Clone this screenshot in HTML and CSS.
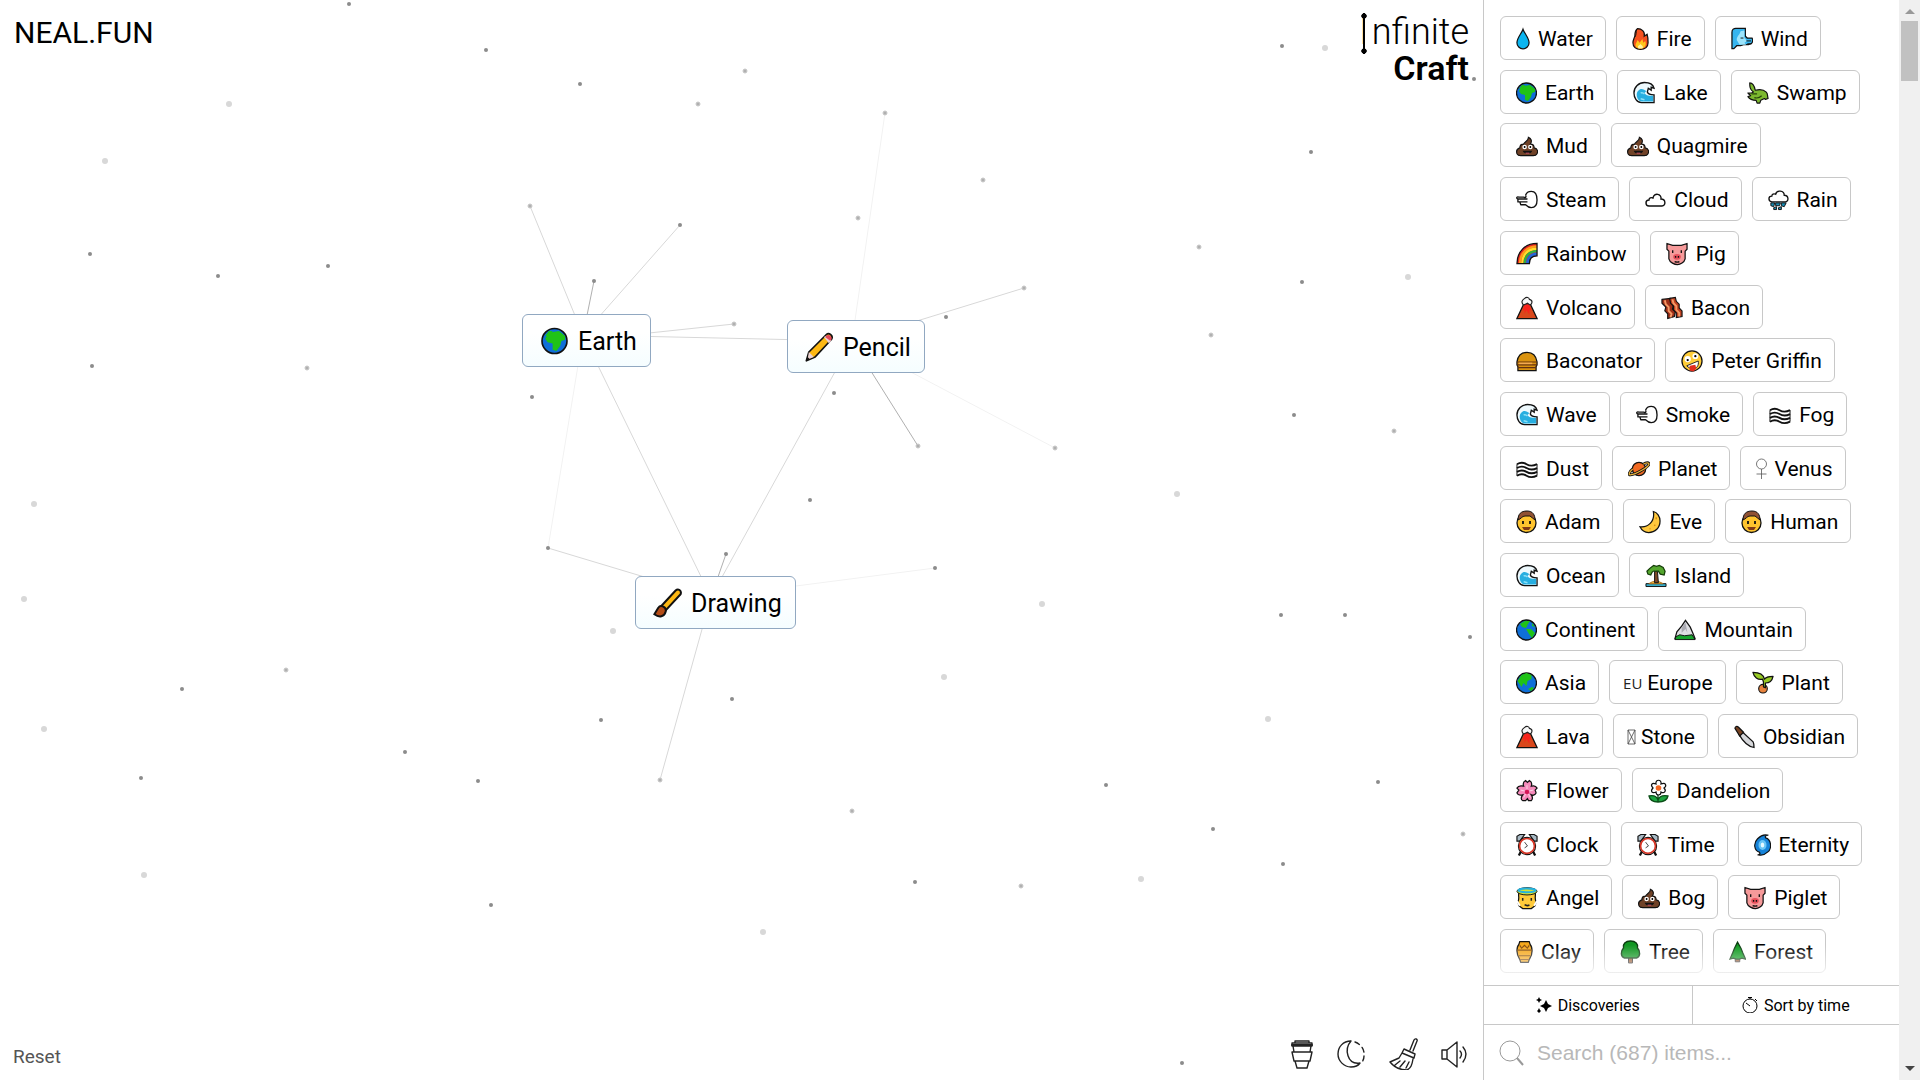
FILE: index.html
```html
<!DOCTYPE html>
<html lang="en">
<head>
<meta charset="utf-8">
<title>Infinite Craft</title>
<link rel="stylesheet" href="styles.css">
</head>
<body>
<svg class="sprite" aria-hidden="true">
  <defs>
    <g id="globe"><circle cx="10.500" cy="12" r="10" fill="#0f6fd8" stroke="#111" stroke-width="1.300"/></g>
    <symbol id="water" viewBox="0 0 15 24"><path d="M7.500 1.500C6 6 1 11 1 16a6.500 6.500 0 0 0 13 0C14 11 9 6 7.500 1.500z" fill="#0bb5f0" stroke="#111" stroke-width="1.300"/></symbol>
    <symbol id="fire" viewBox="0 0 18 24"><path d="M6 1c4 0 8 3 7 8l3-2c1 3 1 5 1 9 0 4-3 7-8 7s-8-3-8-7c0-3 1-4 2-7 0-3 0-6 3-8z" fill="#f4511e" stroke="#111" stroke-width="1.300"/><path d="M5 2c-1 3 0 5-2 8" fill="none" stroke="#111"/><path d="M4 17l2-4 2 3 3-4 1 4 2-2c2 5-1 8-5 8s-6-2-5-5z" fill="#ffc61a"/><path d="M7 22c-2-3 1-3 2-5 1 2 4 3 2 5z" fill="#fff5a0"/></symbol>
    <symbol id="wind" viewBox="0 0 23 24"><path d="M1 22V5c0-3 2-4 4-4h10v8l2 2h5c1 2 1 3 0 5-1 2-3 1-4 2h-5l-3 1H6l-3 3z" fill="#36b5ef" stroke="#111" stroke-width="1.300"/><path d="M14 3v8l3 3-3 2 2 2H9l-3-5c0-4 3-5 4-9z" fill="#9de4fb"/><path d="M10 11h3M16 14h5M17 17h4" stroke="#111" fill="none"/></symbol>
    <symbol id="earth" viewBox="0 0 21 24"><use href="#globe"/><path d="M5 7l3-2 6-1 5 4 0 3-3 1-1 4-3 4-3-1 0-5-4-1-2-3z" fill="#20c316"/><path d="M3 8l3-4 3 0-3 4z" fill="#20c316"/></symbol>
    <symbol id="americas" viewBox="0 0 21 24"><use href="#globe"/><path d="M4 6l5-3 5 0-2 3-2 4-4-1zM10 11l5 0 4 4-3 5-3-4z" fill="#20c316"/><path d="M16 5l3 4-3-1z" fill="#20c316"/></symbol>
    <symbol id="asia" viewBox="0 0 21 24"><use href="#globe"/><path d="M1.500 10l4-6 5-2 5 2 0 4-4 2-1 5-3-3-2 4zM12 18l4-2 2 1-3 3z" fill="#20c316"/></symbol>
    <symbol id="wave" viewBox="0 0 23 24"><path d="M22 22H9C4 22 1 17 1 12 1 6 6 1 12 1c5 0 9 2 10 6l-3-1 0 3-3-2-1 4c1 3 4 3 7 3z" fill="#eef9fd" stroke="#111" stroke-width="1.400"/><path d="M21 21H9c-5-1-7-9-3-12 3-3 6 0 8 1l-2 2c2 3 5 3 9 3z" fill="#27aee0"/><path d="M8 12c2-1 3 0 4 1M8 18l4 1" stroke="#8ce0f7" stroke-width="1.500" fill="none"/></symbol>
    <symbol id="croc" viewBox="0 0 24 24"><path d="M3 1c3 0 5 3 6 8 4-1 9-1 12 2 2 2 1 4 2 7l-3 1-1-1-4 2-1 3h-3l-1-3c-4 0-7-1-9-4l3-1-3-3 4 0 2-1C3 8 3 5 3 1z" fill="#7cb82f" stroke="#111" stroke-width="1.300" stroke-linejoin="round"/><path d="M5 13h6M8 17c3 1 6 0 8-2" stroke="#26450b" fill="none" stroke-width="1.300"/></symbol>
    <symbol id="poop" viewBox="0 0 23 24"><path d="M13 3c3 1 4 4 2 7 3 0 4 2 4 4 4 1 4 4 3 6-1 2-2 2-4 2H5c-2 0-3 0-4-2-1-3 0-5 3-6 0-3 1-4 4-4 0-2 5-3 5-7z" fill="#704227" stroke="#111" stroke-width="1.200"/><circle cx="9" cy="13" r="2.400" fill="#fff"/><circle cx="15" cy="13" r="2.400" fill="#fff"/><path d="M9 12v2M15 12v2" stroke="#111" stroke-width="1.600"/><path d="M7 17h10c-1 4-9 4-10 0z" fill="#111"/><path d="M10 19h4v1h-4z" fill="#e25b70"/></symbol>
    <symbol id="steam" viewBox="0 0 23 24"><path d="M10 7c1-3 3-4 6-4 4 0 6 4 6 9 0 5-2 8-6 8-3 0-4-1-6-3H5l-1-3H2v-3M10 7c1 2 0 3-2 2H3C0 8 0 11 3 11h9M3 14h9" fill="none" stroke="#111" stroke-width="1.400" stroke-linejoin="round"/></symbol>
    <symbol id="cloud" viewBox="0 0 21 24"><path d="M4 18c-4 0-4-6 0-6 0-2 2-3 4-2 1-6 9-4 8 1 5 0 5 7 1 7z" fill="#fff" stroke="#111" stroke-width="1.400"/></symbol>
    <symbol id="rain" viewBox="0 0 22 24"><path d="M4 14C0 13 0 8 4 8c0-2 2-3 4-2 1-5 9-4 9 1 5 0 5 7 1 7z" fill="#fff" stroke="#111" stroke-width="1.400"/><path d="M3 15h4l-1 4-3-1zM8 15h5l-1 3H8zM14 15h5l-2 4-3-1zM6 20l3-1 0 3-3 0zM11 20l3-1 0 3-3 0z" fill="#168db5" stroke="#111"/></symbol>
    <symbol id="rainbow" viewBox="0 0 23 24"><path d="M1 22C1 9 10 1 22 1v13c-5 0-8 3-8 8z" fill="#e92222"/><path d="M4 22C4 11 12 4 22 4" fill="none" stroke="#ff9c1a" stroke-width="2.400"/><path d="M6.500 22C6.500 12 13 6.500 22 6.500" fill="none" stroke="#ffe12b" stroke-width="2.400"/><path d="M9 22C9 14 14 9 22 9" fill="none" stroke="#2ab442" stroke-width="2.400"/><path d="M12 22c0-6 4-10 10-10" fill="none" stroke="#2366d8" stroke-width="3"/><path d="M1 22C1 9 10 1 22 1v13c-5 0-8 3-8 8z" fill="none" stroke="#111" stroke-width="1.300"/></symbol>
    <symbol id="pig" viewBox="0 0 23 24"><path d="M1 1l6 2h9l6-2v6l-2 2v8c-1 4-5 6-8 6s-8-2-9-6V9L1 7z" fill="#f69a9a" stroke="#111" stroke-width="1.300" stroke-linejoin="round"/><ellipse cx="11.500" cy="15" rx="4" ry="3" fill="#e8505b"/><path d="M7 8v3M16 8v3M10 14v2M13 14v2M9 20q3 1 5 0" stroke="#111" stroke-width="1.400" fill="none"/></symbol>
    <symbol id="volcano" viewBox="0 0 23 24"><path d="M8 8h7l7 15H1z" fill="#d9481c" stroke="#111" stroke-width="1.300"/><path d="M9 8h5l2 7-2-1 0 5-3-5-2 4 0-4-2 1z" fill="#f8221c"/><path d="M8 9C4 5 8 3 9 2c2-2 5-1 5 1 4 1 3 4 1 6l-3-2z" fill="#f7f7f7" stroke="#222" stroke-width="1.200"/></symbol>
    <symbol id="bacon" viewBox="0 0 23 24"><path d="M1 3l9-1 0 4 3 3-1 4 3 3-1 5-7 2 0-5-3-3 1-4-4-4z" fill="#9d2f18" stroke="#111" stroke-width="1.200"/><path d="M9 2l6-1 1 4 3 3 0 4 3 3 0 6-6 1 0-5-3-3 0-4-3-3z" fill="#bd3f20" stroke="#111" stroke-width="1.200"/><path d="M4 4l1 4 3 3 0 4 3 3-1 4M12 3l1 4 3 3 0 4 3 3 0 4" stroke="#f59965" stroke-width="2" fill="none"/></symbol>
    <symbol id="burger" viewBox="0 0 23 24"><path d="M1 13C2 6 6 3 11.500 3S21 6 22 13l0 3-1 2 0 4H2v-4l-1-2z" fill="#da930f" stroke="#111" stroke-width="1.300"/><path d="M1 13h21M1 16h21M2 19h19" stroke="#633011" stroke-width="1.200"/><path d="M3 14.500h14" stroke="#f4aa51" stroke-width="1.600"/></symbol>
    <symbol id="zany" viewBox="0 0 23 24"><circle cx="11.500" cy="12" r="10.500" fill="#ffcd38" stroke="#111" stroke-width="1.300"/><circle cx="7" cy="10" r="3.300" fill="#fff"/><circle cx="15" cy="7" r="3" fill="#fff"/><circle cx="7" cy="11" r="1.200"/><circle cx="15" cy="7" r="1.200"/><path d="M6 17l12-5c1 5-2 8-5 8s-5-1-7-3z" fill="#fff" stroke="#222"/><path d="M9 17l6-1 1 4-3 3-4-1z" fill="#e12d1d"/></symbol>
    <symbol id="fog" viewBox="0 0 23 24"><path d="M1 7q5-3 10 0t11 0M1 11q5-3 10 0t11 0M1 15q5-3 10 0t11 0M1 19q5-3 10 0t11 0" fill="none" stroke="#111" stroke-width="2"/><path d="M1 7v12M22 7v12" stroke="#111"/></symbol>
    <symbol id="planet" viewBox="0 0 23 24"><circle cx="11.500" cy="12" r="7" fill="#f26a22" stroke="#111" stroke-width="1.300"/><path d="M5 12C1 15 0 19 3 18c5 0 18-8 19-11 0-2-3-2-6 0" fill="none" stroke="#111" stroke-width="3"/><path d="M5 12C1 15 0 19 3 18c5 0 18-8 19-11 0-2-3-2-6 0" fill="none" stroke="#e9b33c" stroke-width="1.300"/></symbol>
    <symbol id="venus" viewBox="0 0 12 24"><path d="M6 12v10M1 17h10" stroke="#555" stroke-width=".8"/><circle cx="6" cy="7" r="5" fill="none" stroke="#555" stroke-width=".8"/></symbol>
    <symbol id="man" viewBox="0 0 21 24"><circle cx="10.500" cy="13" r="9.500" fill="#ffc42e" stroke="#111" stroke-width="1.300"/><path d="M2 10C2 4 5 1 11 1s8 4 8 9c-2-1-3-3-5-4H9c-3 0-4 3-7 4z" fill="#905133" stroke="#111"/><path d="M7 11v3M14 11v3" stroke="#111" stroke-width="1.800"/><path d="M6 17h9l-2 3H8z" fill="#833a16"/></symbol>
    <symbol id="moon" viewBox="0 0 23 24"><path d="M15 1c4 1 7 5 7 10 0 7-5 12-12 12-4 0-7-2-9-6 8 1 16-5 14-16z" fill="#ffc83d" stroke="#111" stroke-width="1.300"/><path d="M18 7v2M16 15l1 1M11 19h1" stroke="#d99012" stroke-width="1.500"/></symbol>
    <symbol id="island" viewBox="0 0 23 24"><path d="M1 20h21v3H1z" fill="#35abc8" stroke="#111"/><path d="M4 20q7-5 15 0z" fill="#f7c145" stroke="#a96e1c"/><path d="M10 7h3l1 12h-4z" fill="#7d4927" stroke="#111"/><path d="M11 7C8 6 7 8 6 11L3 10 2 7 5 4 9 1l3 1 3-1 4 2 2 4-1 4-4-1-2-3z" fill="#54a62e" stroke="#143c08" stroke-width="1.300"/></symbol>
    <symbol id="mountain" viewBox="0 0 23 24"><path d="M1 21l2-7 5-6 4-6 5 7 3 7 2 5z" fill="#dedee2" stroke="#111" stroke-width="1.300"/><path d="M12 4l-4 6 0 5 4-4 2 4z" fill="#aaaab2"/><path d="M2 19l4-2 5 1 8-1 3 5H1z" fill="#16a52b" stroke="#111"/></symbol>
    <symbol id="plant" viewBox="0 0 23 24"><circle cx="11.500" cy="18" r="4.500" fill="#e8833d" stroke="#111" stroke-width="1.200"/><path d="M12 16v-5l-1-3C6 9 2 6 1 1c7 0 11 2 12 7 2-3 5-3 9-3-1 5-4 7-8 7v5z" fill="#98cb24" stroke="#111" stroke-width="1.300" stroke-linejoin="round"/></symbol>
    <symbol id="tofu" viewBox="0 0 9 24"><path d="M1 5h7v14H1zM1 5l7 14M8 5L1 19" fill="none" stroke="#444" stroke-width=".8"/></symbol>
    <symbol id="knife" viewBox="0 0 22 24"><path d="M8 6l12 11c1 2 1 4 1 6-7-1-12-7-16-14z" fill="#d6d7da" stroke="#111" stroke-width="1.300"/><path d="M1 3c0-2 2-3 4-1l5 5-4 4z" fill="#774323" stroke="#111" stroke-width="1.300"/></symbol>
    <symbol id="flower" viewBox="0 0 23 24"><path d="M8 7c-1-3 0-5 2-6l2 2 2-2c2 1 3 3 2 6 3-1 5 0 6 2l-2 2 1 3c-1 2-3 3-5 2 2 3 1 5 0 6l-3 0-1-2-2 2-3 0c-2-1-2-3 0-6-3 1-5 0-6-2l2-3-2-2c1-2 3-3 7-2z" fill="#f68abb" stroke="#111" stroke-width="1.300"/><circle cx="11.500" cy="13" r="2.400" fill="#d31757"/><path d="M11.500 6v4M5 11l4 1M18 11l-4 1M8 19l2-4M15 19l-2-4" stroke="#fad8e7"/></symbol>
    <symbol id="dandelion" viewBox="0 0 21 24"><path d="M10 15v8C6 23 2 22 1 17c5-1 8 1 9 4 1-3 4-5 10-4-1 5-5 6-10 6" fill="#1da540" stroke="#0b4d17" stroke-width="1.300"/><path d="M8 5c-1-5 6-5 5 0 5-2 6 2 3 4 3 3 0 6-3 4 0 4-5 4-5 0-4 2-6-1-3-4-3-3-1-6 3-4z" fill="#fff" stroke="#111" stroke-width="1.200"/><circle cx="10.500" cy="9" r="2.800" fill="#f56722"/></symbol>
    <symbol id="clock" viewBox="0 0 23 24"><path d="M1 8V3l3-2h5L4 8zM22 8V3l-3-2h-5l5 7z" fill="#a9bac5" stroke="#111" stroke-width="1.200"/><path d="M5 19l-2 4M18 19l2 4" stroke="#111" stroke-width="2.400"/><circle cx="11.500" cy="13" r="9" fill="#fff" stroke="#111" stroke-width="1.200"/><circle cx="11.500" cy="13" r="7.800" fill="#fff" stroke="#d63525" stroke-width="1.800"/><path d="M9 9l3 4-3 2" fill="none" stroke="#444"/></symbol>
    <symbol id="cyclone" viewBox="0 0 19 24"><path d="M15 1c-2 1-3 1-2 3 7 2 7 13 2 16-3 3-6 4-10 3 2-1 2-2 1-3-6-2-7-10-2-15 3-3 7-5 11-4z" fill="#1683d9" stroke="#111" stroke-width="1.300"/><ellipse cx="9.500" cy="12" rx="4.500" ry="5.500" fill="#69c5f6"/><ellipse cx="9.500" cy="12" rx="2" ry="2.800" fill="#e5f8ff"/></symbol>
    <symbol id="angel" viewBox="0 0 23 24"><path d="M3 6c-1 4 1 6-1 10l1 4 4 3h9l4-3 1-4c-2-4 0-6-1-10z" fill="#ffca3a" stroke="#111" stroke-width="1.300"/><ellipse cx="11.500" cy="5" rx="10.500" ry="3.800" fill="#d9e231" stroke="#111"/><ellipse cx="11.500" cy="4" rx="9" ry="2" fill="none" stroke="#25b2de" stroke-width="2"/><path d="M7 12v3M16 12v3M9 19q3 2 5 0" stroke="#222" stroke-width="1.600" fill="none"/><path d="M1 15l3 5M22 15l-3 5" stroke="#fff" stroke-width="2"/></symbol>
    <symbol id="vase" viewBox="0 0 18 24"><path d="M4 1h10l1 3c2 2 2 4 2 7 0 5-2 7-3 9l-1 3H5l-1-3c-2-3-3-5-3-9 0-3 0-5 2-7z" fill="#f6a81c" stroke="#111" stroke-width="1.300"/><path d="M4 5l2 3 3-3 3 3 2-3M1 10h16M3 16h12M4 20h10" fill="none" stroke="#844c0d" stroke-width="1.200"/></symbol>
    <symbol id="tree" viewBox="0 0 20 24"><path d="M8 17h4v6H8z" fill="#925329" stroke="#222"/><path d="M10 1c5 0 8 3 7 7 3 3 3 9-1 10H4C0 17 0 11 3 8 2 4 5 1 10 1z" fill="#119622" stroke="#0b3c10" stroke-width="1.400"/></symbol>
    <symbol id="forest" viewBox="0 0 19 24"><path d="M7 18h5v5H7z" fill="#925329" stroke="#222"/><path d="M9.500 1l4 7 2 5 3 7-4-1-3 1H8l-3-1-4 1 3-7 2-5z" fill="#0f9a20" stroke="#0b3c10" stroke-width="1.400"/></symbol>
    <symbol id="pencil" viewBox="0 0 23 24"><path d="M1 23l2-7L17 2c2-2 6 1 4 4L8 20z" fill="#fdb813" stroke="#111" stroke-width="1.400" stroke-linejoin="round"/><path d="M3 16l4 4-5 2zM15 4l2-1 4 4-2 2z" fill="#ead2d4"/><path d="M17 3c2-2 5 1 4 3l-1 1-4-3z" fill="#e5485a"/><path d="M1 23l1-3 2 2z" fill="#111"/></symbol>
    <symbol id="brush" viewBox="0 0 23 24"><path d="M6 15L18 2c2-2 5 0 4 3L10 18z" fill="#fdb813" stroke="#111" stroke-width="1.600"/><path d="M1 21l3-5c2-3 7-1 6 3-1 4-5 5-9 2z" fill="#b44c16" stroke="#111" stroke-width="1.600"/></symbol>
  </defs>
</svg>

<div class="app">
  <main class="board">
    <svg class="stars" aria-hidden="true">
      <g class="links">
        <path d="M583 335L852 341M583 335L711 597M852 341L711 597"/>
        <path d="M583 335L530 206M583 335L680 225M583 340L734 324M852 341L1024 288M711 597L548 548"/>
        <path class="strong" d="M583 335L594 281M852 341L918 446M711 597L726 554"/>
        <path class="faint" d="M583 335L548 548M852 341L885 113M852 341L1055 448M711 597L935 568"/>
        <path d="M711 597L660 780"/>
      </g>
      <g class="dark">
        <circle cx="349" cy="4" r="2"/><circle cx="486" cy="50" r="2"/><circle cx="580" cy="84" r="2"/><circle cx="680" cy="225" r="2"/><circle cx="594" cy="281" r="2"/><circle cx="328" cy="266" r="2"/><circle cx="218" cy="276" r="2"/><circle cx="90" cy="254" r="2"/><circle cx="92" cy="366" r="2"/><circle cx="532" cy="397" r="2"/><circle cx="834" cy="393" r="2"/><circle cx="946" cy="317" r="2"/><circle cx="810" cy="500" r="2"/><circle cx="726" cy="554" r="2"/><circle cx="548" cy="548" r="2"/><circle cx="935" cy="568" r="2"/><circle cx="732" cy="699" r="2"/><circle cx="601" cy="720" r="2"/><circle cx="182" cy="689" r="2"/><circle cx="141" cy="778" r="2"/><circle cx="405" cy="752" r="2"/><circle cx="478" cy="781" r="2"/><circle cx="491" cy="905" r="2"/><circle cx="915" cy="882" r="2"/><circle cx="1106" cy="785" r="2"/><circle cx="1213" cy="829" r="2"/><circle cx="1182" cy="1063" r="2"/><circle cx="1283" cy="864" r="2"/><circle cx="1378" cy="782" r="2"/><circle cx="1470" cy="637" r="2"/><circle cx="1345" cy="615" r="2"/><circle cx="1281" cy="615" r="2"/><circle cx="1294" cy="415" r="2"/><circle cx="1302" cy="282" r="2"/><circle cx="1311" cy="152" r="2"/><circle cx="1282" cy="46" r="2"/><circle cx="1474" cy="79" r="2"/>
      </g>
      <g class="mid">
        <circle cx="698" cy="104" r="2"/><circle cx="745" cy="71" r="2"/><circle cx="885" cy="113" r="2"/><circle cx="983" cy="180" r="2"/><circle cx="858" cy="218" r="2"/><circle cx="530" cy="206" r="2"/><circle cx="734" cy="324" r="2"/><circle cx="307" cy="368" r="2"/><circle cx="918" cy="446" r="2"/><circle cx="1055" cy="448" r="2"/><circle cx="1024" cy="288" r="2"/><circle cx="660" cy="780" r="2"/><circle cx="286" cy="670" r="2"/><circle cx="1021" cy="886" r="2"/><circle cx="852" cy="811" r="2"/><circle cx="1463" cy="834" r="2"/><circle cx="1394" cy="431" r="2"/><circle cx="1211" cy="335" r="2"/><circle cx="1199" cy="247" r="2"/>
      </g>
      <g class="pale">
        <circle cx="229" cy="104" r="3"/><circle cx="105" cy="161" r="3"/><circle cx="1042" cy="604" r="3"/><circle cx="944" cy="677" r="3"/><circle cx="613" cy="631" r="3"/><circle cx="44" cy="729" r="3"/><circle cx="34" cy="504" r="3"/><circle cx="24" cy="599" r="3"/><circle cx="144" cy="875" r="3"/><circle cx="763" cy="932" r="3"/><circle cx="1141" cy="879" r="3"/><circle cx="1268" cy="719" r="3"/><circle cx="1177" cy="494" r="3"/><circle cx="1408" cy="277" r="3"/><circle cx="1325" cy="48" r="3"/>
      </g>
    </svg>

    <header class="top">
      <a class="site" href="#">NEAL.FUN</a>
      <h1 class="logo"><span class="thin"><span class="initial">I</span>nfinite</span> <span class="bold">Craft</span></h1>
    </header>

    <button class="node node-earth"><svg><use href="#earth"/></svg>Earth</button>
    <button class="node node-pencil"><svg><use href="#pencil"/></svg>Pencil</button>
    <button class="node node-drawing"><svg><use href="#brush"/></svg>Drawing</button>

    <footer class="bottom">
      <button class="reset">Reset</button>
      <div class="tools">
        <button aria-label="Buy me a coffee"><svg viewBox="-3 0 30 32"><path d="M8 5V3h14v2M5 5h20v3H5zM6 8l1 6h16l1-6M7 14H5l2 9h16l2-9h-2M8 23l2 7h10l2-7"/><path d="M5 7h20" stroke-width="2"/></svg></button>
        <button aria-label="Dark mode"><svg viewBox="0 0 30 32"><path d="M15 3C7 3 2 9 2 16s6 13 13 13c4 0 7-1 9-4C11 27 8 11 15 3"/><path d="M19 4c6 2 10 8 9 14 0 3-1 5-3 7" stroke-dasharray="5 4"/></svg></button>
        <button aria-label="Clear board"><svg viewBox="0 0 30 32"><path d="M22 12l4-10c1-2 4-1 3 1l-4 10M16 11l11 5-1 4-12-5zM14 15l-3 5-9 4c4 5 10 8 17 8 4-2 5-5 6-11M7 27l5-4M12 29l5-6M18 30l3-6"/></svg></button>
        <button aria-label="Sound"><svg viewBox="0 0 30 32"><path d="M2 12h5v9H2zM7 12L17 4v25L7 21M20 13q3 3 0 7M23 9q6 7 0 15"/></svg></button>
      </div>
    </footer>
  </main>

  <aside class="sidebar">
    <div class="items">
      <div class="row"><button class="chip"><svg class="w15"><use href="#water"/></svg>Water</button><button class="chip"><svg class="w18"><use href="#fire"/></svg>Fire</button><button class="chip"><svg><use href="#wind"/></svg>Wind</button></div>
      <div class="row"><button class="chip"><svg class="w21"><use href="#earth"/></svg>Earth</button><button class="chip"><svg><use href="#wave"/></svg>Lake</button><button class="chip"><svg><use href="#croc"/></svg>Swamp</button></div>
      <div class="row"><button class="chip"><svg><use href="#poop"/></svg>Mud</button><button class="chip"><svg><use href="#poop"/></svg>Quagmire</button></div>
      <div class="row"><button class="chip"><svg><use href="#steam"/></svg>Steam</button><button class="chip"><svg class="w21"><use href="#cloud"/></svg>Cloud</button><button class="chip"><svg class="w21"><use href="#rain"/></svg>Rain</button></div>
      <div class="row"><button class="chip"><svg><use href="#rainbow"/></svg>Rainbow</button><button class="chip"><svg><use href="#pig"/></svg>Pig</button></div>
      <div class="row"><button class="chip"><svg><use href="#volcano"/></svg>Volcano</button><button class="chip"><svg><use href="#bacon"/></svg>Bacon</button></div>
      <div class="row"><button class="chip"><svg><use href="#burger"/></svg>Baconator</button><button class="chip"><svg><use href="#zany"/></svg>Peter Griffin</button></div>
      <div class="row"><button class="chip"><svg><use href="#wave"/></svg>Wave</button><button class="chip"><svg><use href="#steam"/></svg>Smoke</button><button class="chip"><svg><use href="#fog"/></svg>Fog</button></div>
      <div class="row"><button class="chip"><svg><use href="#fog"/></svg>Dust</button><button class="chip"><svg><use href="#planet"/></svg>Planet</button><button class="chip tight"><svg class="w12"><use href="#venus"/></svg>Venus</button></div>
      <div class="row"><button class="chip"><svg class="w21"><use href="#man"/></svg>Adam</button><button class="chip"><svg><use href="#moon"/></svg>Eve</button><button class="chip"><svg class="w21"><use href="#man"/></svg>Human</button></div>
      <div class="row"><button class="chip"><svg><use href="#wave"/></svg>Ocean</button><button class="chip"><svg><use href="#island"/></svg>Island</button></div>
      <div class="row"><button class="chip"><svg class="w21"><use href="#americas"/></svg>Continent</button><button class="chip"><svg><use href="#mountain"/></svg>Mountain</button></div>
      <div class="row"><button class="chip"><svg class="w21"><use href="#asia"/></svg>Asia</button><button class="chip tight"><span class="letters">EU</span>Europe</button><button class="chip"><svg><use href="#plant"/></svg>Plant</button></div>
      <div class="row"><button class="chip"><svg><use href="#volcano"/></svg>Lava</button><button class="chip tight"><svg class="w9"><use href="#tofu"/></svg>Stone</button><button class="chip"><svg class="w21"><use href="#knife"/></svg>Obsidian</button></div>
      <div class="row"><button class="chip"><svg><use href="#flower"/></svg>Flower</button><button class="chip"><svg class="w21"><use href="#dandelion"/></svg>Dandelion</button></div>
      <div class="row"><button class="chip"><svg><use href="#clock"/></svg>Clock</button><button class="chip"><svg><use href="#clock"/></svg>Time</button><button class="chip"><svg class="w18"><use href="#cyclone"/></svg>Eternity</button></div>
      <div class="row"><button class="chip"><svg><use href="#angel"/></svg>Angel</button><button class="chip"><svg><use href="#poop"/></svg>Bog</button><button class="chip"><svg><use href="#pig"/></svg>Piglet</button></div>
      <div class="row"><button class="chip"><svg class="w18"><use href="#vase"/></svg>Clay</button><button class="chip"><svg class="w21"><use href="#tree"/></svg>Tree</button><button class="chip"><svg class="w18"><use href="#forest"/></svg>Forest</button></div>
    </div>
    <div class="tabs">
      <button><svg viewBox="0 0 16 16"><path d="M10 3l2 4 4 2-4 2-2 4-2-4-4-2 4-2zM3 0l1 2 2 1-2 1-1 2-1-2-2-1 2-1zM3 11l1 2 1 1-1 1-1 1-1-1-1-1 1-1z" fill="#000"/></svg>Discoveries</button>
      <button><svg viewBox="0 0 16 16"><circle cx="8" cy="9" r="7" fill="none" stroke="#000"/><path d="M8 9L4 6M6 .5h4M8 1v1M13 2l2 2" stroke="#000" fill="none"/></svg>Sort by time</button>
    </div>
    <label class="search">
      <svg viewBox="0 0 26 26"><circle cx="11" cy="11" r="10"/><path d="M18 18l6 7" stroke-width="2"/></svg>
      <input type="text" placeholder="Search (687) items..." aria-label="Search items">
    </label>
  </aside>

  <div class="scrollbar" aria-hidden="true"><span class="up"></span><span class="thumb"></span><span class="down"></span></div>
</div>
</body>
</html>
```
FILE: styles.css
```css
* { box-sizing: border-box; }

body {
  margin: 0;
  background: #fff;
  color: #000;
  font-family: Roboto, "Liberation Sans", sans-serif;
}

button {
  margin: 0;
  padding: 0;
  border: 0;
  background: none;
  color: inherit;
  font: inherit;
  white-space: nowrap;
  cursor: pointer;
}

.sprite {
  position: absolute;
  width: 0;
  height: 0;
}

.app {
  display: flex;
  min-height: 100vh;
}

/* Board */

.board {
  position: relative;
  flex: 1;
  display: flex;
  flex-direction: column;
  justify-content: space-between;
  overflow: hidden;
}

.stars {
  position: absolute;
  inset: 0;
  width: 100%;
  height: 100%;
}

.links { stroke: #d8d8d8; fill: none; }
.links .strong { stroke: #b0b0b0; }
.links .faint { stroke: #f2f2f2; }
.dark { fill: #8c8c8c; }
.mid { fill: #b0b0b0; stroke: #c8c8c8; }
.pale { fill: #d8d8d8; }

.top {
  display: flex;
  justify-content: space-between;
  padding: 8px 14px 0;
}

.site {
  position: relative;
  color: #000;
  font-size: 30px;
  line-height: 50px;
  text-decoration: none;
}

.logo {
  position: relative;
  display: flex;
  flex-direction: column;
  align-items: flex-end;
  margin: 0;
  font-size: 36px;
}

.thin {
  height: 44px;
  font-weight: 300;
  line-height: 48px;
}

/* The capital is stretched into a link between two dots. */
.initial {
  position: relative;
  display: inline-block;
  width: 8px;
  margin-right: 4px;
  font-weight: 100;
  text-indent: -1px;
}

.initial::before,
.initial::after {
  content: "";
  position: absolute;
  top: 5px;
  height: 41px;
}

.initial::before {
  left: 3px;
  width: 2px;
  background: #000;
}

.initial::after {
  left: 1px;
  width: 6px;
  background:
    radial-gradient(circle 3px at 3px 3px, #000 80%, transparent),
    radial-gradient(circle 3px at 3px 38px, #000 80%, transparent);
}

.bold {
  font-size: 34px;
  font-weight: 600;
  line-height: 32px;
}

.node {
  position: absolute;
  display: flex;
  align-items: center;
  gap: 9px;
  height: 53px;
  padding: 1px 13px 0 17px;
  border: 1px solid #91a8c1;
  border-radius: 6px;
  background: linear-gradient(#fff 35%, #f5fdff);
  font-size: 25px;
}

.node svg { width: 29px; height: 30px; }

.node-earth { left: 522px; top: 314px; }
.node-pencil { left: 787px; top: 320px; }
.node-drawing { left: 635px; top: 576px; }

.bottom {
  position: relative;
  display: flex;
  align-items: center;
  justify-content: space-between;
  height: 52px;
  padding: 0 13px;
}

.reset {
  padding-top: 4px;
  color: #555;
  font-size: 19px;
}

.tools {
  display: flex;
  gap: 22px;
}

.tools svg {
  display: block;
  width: 30px;
  height: 32px;
  fill: none;
  stroke: #222;
  stroke-width: 1.4;
  stroke-linecap: round;
  stroke-linejoin: round;
}

/* Sidebar */

.sidebar {
  display: flex;
  flex-direction: column;
  width: 416px;
  border-left: 1px solid #c8c8c8;
}

.items {
  position: relative;
  flex: 1;
  display: flex;
  flex-direction: column;
  justify-content: space-between;
  padding: 16px 16px 12px;
}

.items::after {
  content: "";
  position: absolute;
  right: 0;
  bottom: 0;
  left: 0;
  height: 40px;
  background: linear-gradient(rgba(255, 255, 255, 0), #fff);
  pointer-events: none;
}

.row {
  display: flex;
  gap: 10px;
}

.chip {
  display: flex;
  align-items: center;
  gap: 8px;
  height: 44px;
  padding: 2px 12px 0 15px;
  border: 1px solid #c8c8c8;
  border-radius: 6px;
  font-size: 21px;
}

.chip.tight { gap: 5px; padding-left: 13px; }

.chip svg { width: 22px; height: 24px; }
.chip .w21 { width: 21px; }
.chip .w18 { width: 17px; }
.chip .w15 { width: 14px; }
.chip .w12 { width: 15px; }
.chip .w9 { width: 9px; }

.letters {
  color: #222;
  font-family: "Open Sans", sans-serif;
  font-size: 15px;
}

.tabs {
  display: grid;
  grid-template-columns: 1fr 1fr;
  height: 40px;
  border-top: 1px solid #c8c8c8;
  border-bottom: 1px solid #c8c8c8;
}

.tabs button {
  display: flex;
  align-items: center;
  justify-content: center;
  gap: 6px;
  font-size: 16px;
}

.tabs button + button { border-left: 1px solid #c8c8c8; }

.tabs svg { width: 16px; height: 16px; }

.search {
  display: flex;
  align-items: center;
  gap: 12px;
  height: 55px;
  padding: 0 15px;
}

.search svg {
  width: 26px;
  height: 26px;
  fill: none;
  stroke: #999;
}

.search input {
  flex: 1;
  min-width: 0;
  padding: 0;
  border: 0;
  outline: 0;
  background: none;
  font-family: "Liberation Sans", sans-serif;
  font-size: 21px;
}

.search input::placeholder { color: #b8b8b8; }

.scrollbar {
  display: flex;
  flex-direction: column;
  align-items: center;
  width: 21px;
  padding: 9px 2px;
  background: #f0f0f0;
}

.up,
.down {
  border: 5px solid transparent;
  border-top-width: 0;
  border-bottom: 5px solid #999;
}

.down {
  margin-top: auto;
  border-top: 5px solid #444;
  border-bottom-width: 0;
}

.thumb {
  width: 100%;
  height: 60px;
  margin-top: 7px;
  background: #c1c1c1;
}
```
